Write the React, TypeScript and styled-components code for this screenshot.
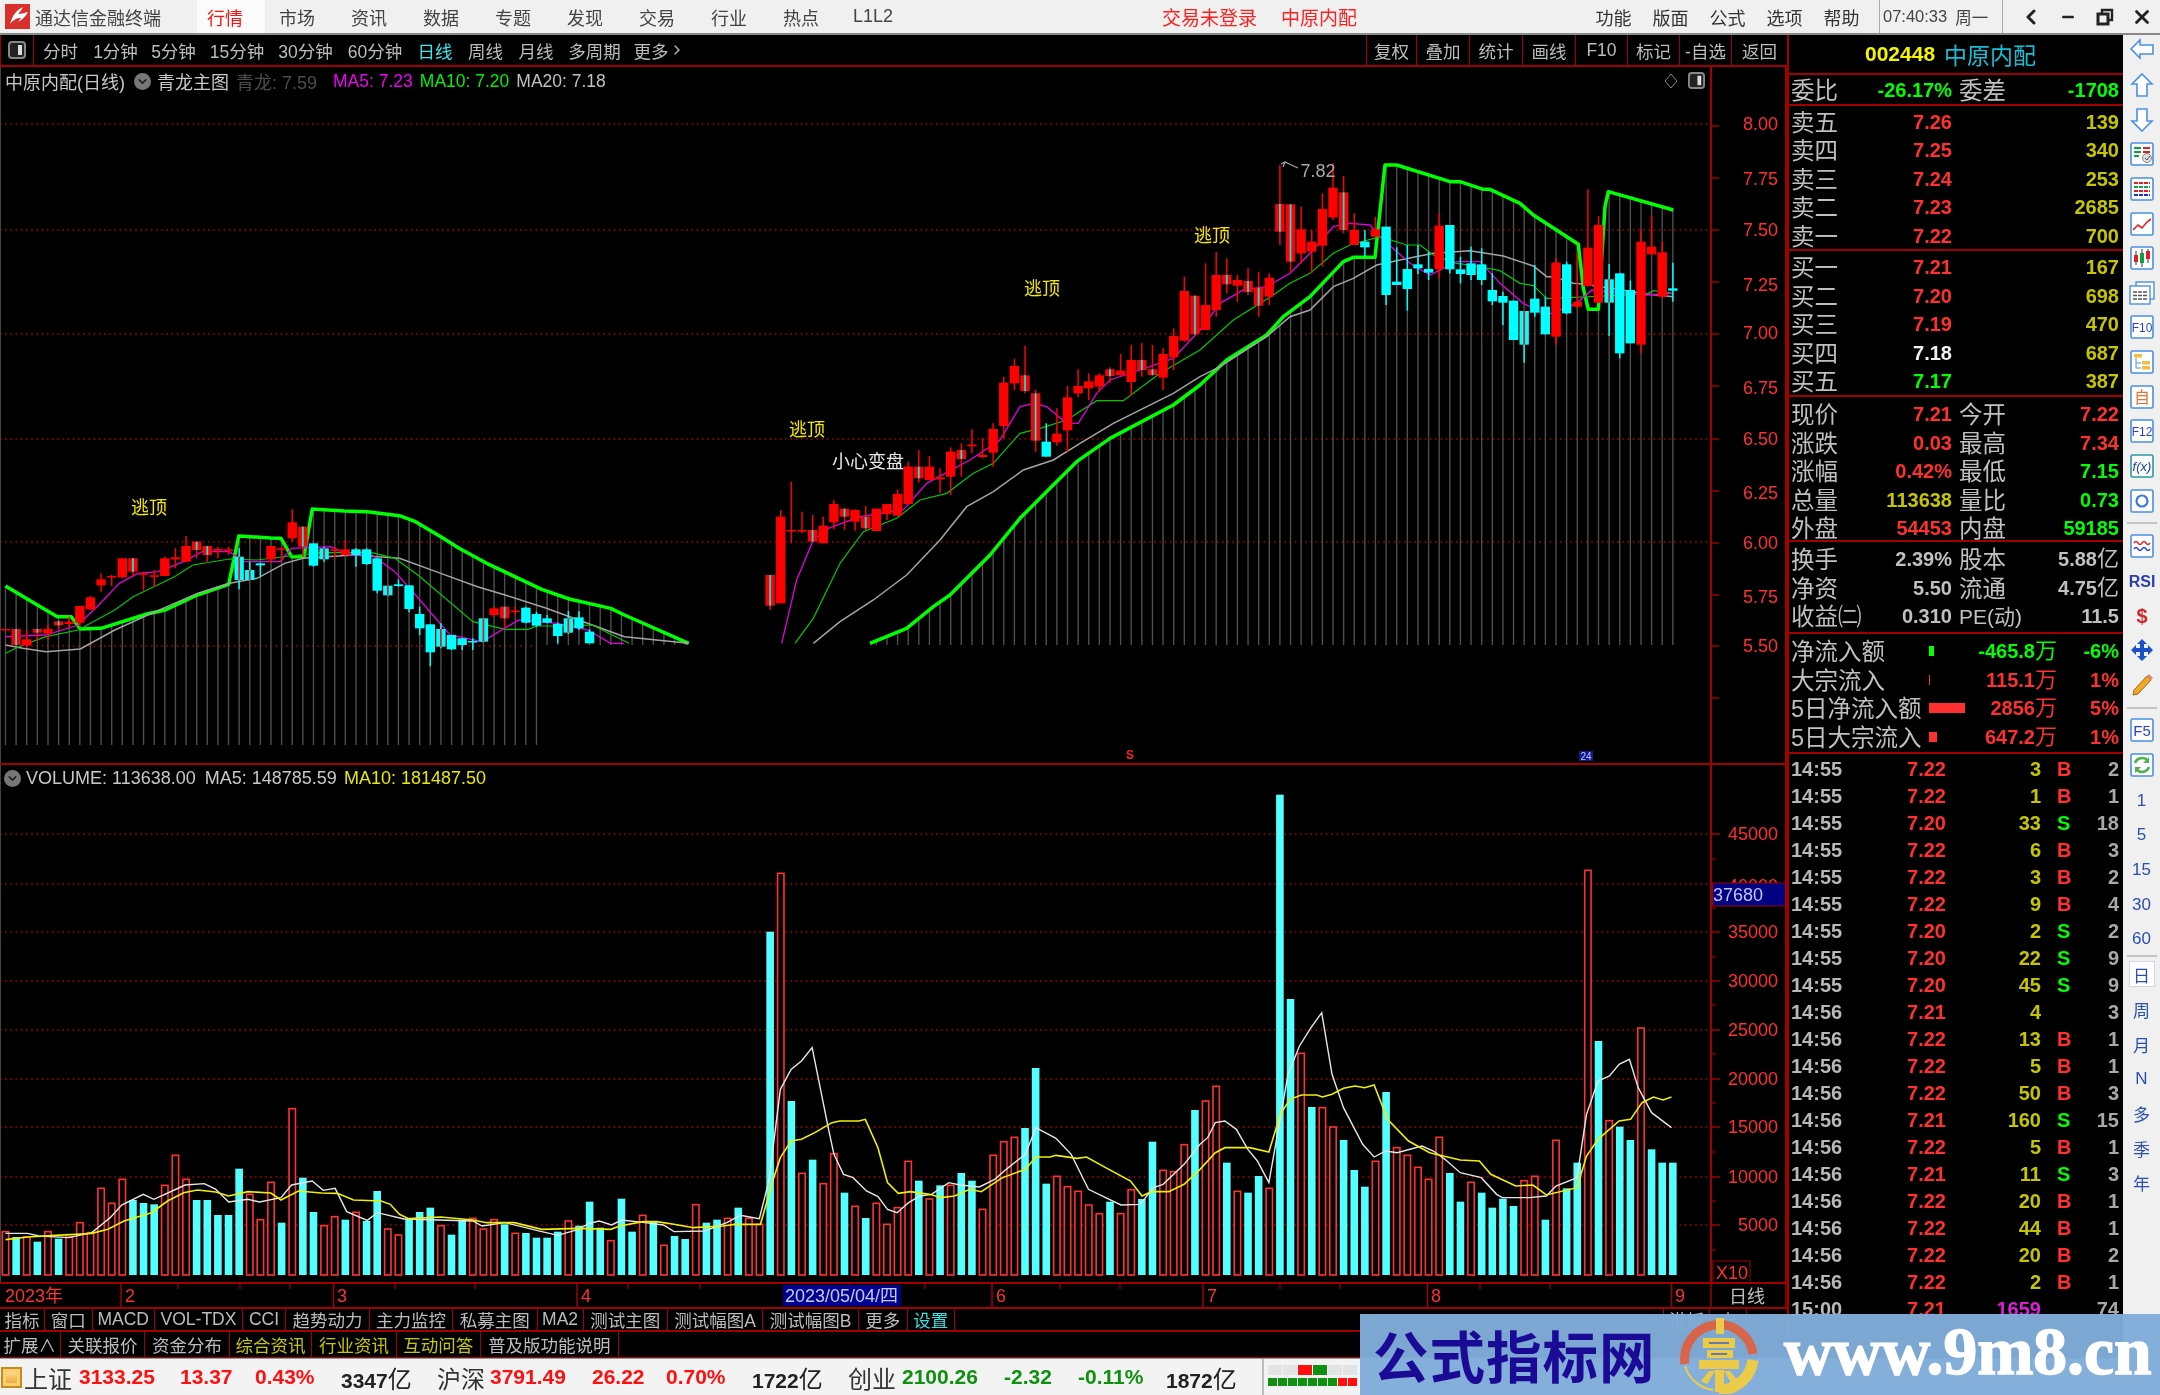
import React from 'react';
import styled, { createGlobalStyle } from 'styled-components';
import { ChevronDown, ChevronLeft, ChevronRight, Minus, X } from 'lucide-react';

const SANS = `"Liberation Sans","Noto Sans CJK SC",sans-serif`;
const RULE = '#a00000';
const RED = '#ff3030';
const CYAN = '#54ffff';

const Global = createGlobalStyle`
  html, body { margin: 0; padding: 0; background: #000; }
  * { box-sizing: border-box; }
  body { font-family: ${SANS}; }
`;

const Page = styled.div`
  position: relative;
  width: 2160px;
  height: 1395px;
  overflow: hidden;
  background: #000;
  display: grid;
  grid-template-rows: 35px 1323px 37px;
  filter: blur(0.35px);
`;

/* ---------- top bar ---------- */
const TopBar = styled.header`
  display: flex;
  align-items: center;
  height: 35px;
  background: #f0f0f0;
  border-bottom: 2px solid #8a8a8a;
  color: #333;
  font-size: 18px;
`;
const Brand = styled.div`
  width: 189px;
  display: flex;
  align-items: center;
  gap: 5px;
  padding-left: 5px;
  color: #444;
`;
const Nav = styled.nav`
  display: flex;
  height: 33px;
  isolation: isolate;
`;
const NavTab = styled.a<{ $active?: boolean }>`
  position: relative;
  width: 72px;
  display: flex;
  align-items: center;
  justify-content: center;
  color: ${p => (p.$active ? '#ff1010' : '#444')};
  &::before {
    content: '';
    display: ${p => (p.$active ? 'block' : 'none')};
    position: absolute;
    left: 8px;
    width: 68px;
    top: 0;
    bottom: 0;
    background: #fbfbfb;
    z-index: -1;
  }
`;
const Notice = styled.span<{ $ml: number }>`
  margin-left: ${p => p.$ml}px;
  color: #ff2020;
  font-size: 19px;
  white-space: nowrap;
`;
const RightTools = styled.div`
  margin-left: auto;
  display: flex;
  align-items: center;
  height: 33px;
`;
const MenuItem = styled.a`
  width: 57px;
  text-align: center;
`;
const Clock = styled.div`
  margin-left: 9px;
  width: 124px;
  height: 33px;
  border-left: 1px solid #aaa;
  border-right: 1px solid #aaa;
  padding-left: 3px;
  display: flex;
  align-items: center;
  gap: 8px;
  font-size: 16.5px;
  color: #444;
`;
const WinControls = styled.div`
  width: 157px;
  padding-left: 9px;
  display: flex;
`;
const WinButton = styled.span`
  width: 37px;
  display: flex;
  align-items: center;
  justify-content: center;
  color: #222;
`;

/* ---------- main layout ---------- */
const Main = styled.main`
  display: grid;
  grid-template-columns: 1787px 336px 37px;
  height: 1323px;
  overflow: hidden;
`;
const LeftColumn = styled.section`
  display: flex;
  flex-direction: column;
  background: #000;
  overflow: hidden;
`;
const Toolbar = styled.div`
  display: flex;
  height: 32px;
  flex: none;
  border-bottom: 2px solid ${RULE};
  color: #bcbcbc;
  font-size: 17.5px;
`;
const ToolIcon = styled.div`
  width: 34px;
  border-right: 1px solid ${RULE};
  border-left: 1px solid ${RULE};
  display: flex;
  align-items: center;
  justify-content: center;
`;
const ToolBtn = styled.a<{ $w: number; $on?: boolean }>`
  width: ${p => p.$w}px;
  display: flex;
  align-items: center;
  justify-content: center;
  white-space: nowrap;
  color: ${p => (p.$on ? '#3ce8f0' : '#bcbcbc')};
`;
const ToolRight = styled.div`
  margin-left: auto;
  display: flex;
`;
const ToolCell = styled.a<{ $w: number }>`
  width: ${p => p.$w}px;
  border-left: 1px solid ${RULE};
  display: flex;
  align-items: center;
  justify-content: center;
  white-space: nowrap;
`;

const ChartPanel = styled.div<{ $h: number }>`
  position: relative;
  height: ${p => p.$h}px;
  flex: none;
  border-bottom: 2px solid ${RULE};
`;
const ChartSvg = styled.svg`
  display: block;
  position: relative;
`;
const Legend = styled.div`
  position: absolute;
  left: 5px;
  top: 4px;
  height: 20px;
  display: flex;
  align-items: center;
  white-space: nowrap;
  font-size: 18px;
  color: #c8c8c8;
`;
const VolLegend = styled(Legend)`
  left: 4px;
  top: 3px;
`;
const LegendItem = styled.span<{ $ml?: number; $c?: string; $fs?: number }>`
  margin-left: ${p => p.$ml ?? 0}px;
  color: ${p => p.$c ?? '#c8c8c8'};
  font-size: ${p => p.$fs ?? 18}px;
`;
const Disc = styled.span<{ $ml?: number }>`
  margin-left: ${p => p.$ml ?? 0}px;
  width: 17px;
  height: 17px;
  border-radius: 50%;
  background: #777;
  color: #222;
  display: inline-flex;
  align-items: center;
  justify-content: center;
`;
const ChartTools = styled.div`
  position: absolute;
  right: 82px;
  top: 5px;
  display: flex;
  gap: 9px;
  align-items: center;
`;
const AxisText = styled.text`
  fill: ${RED};
  font-family: ${SANS};
  font-size: 18px;
  text-anchor: end;
`;
const ChartNote = styled.text<{ $c: string }>`
  fill: ${p => p.$c};
  font-family: ${SANS};
  font-size: 18px;
  text-anchor: middle;
`;
const DateText = styled.text<{ $c?: string }>`
  fill: ${p => p.$c ?? RED};
  font-family: ${SANS};
  font-size: 18px;
`;

const TabRow = styled.div<{ $h: number; $top?: boolean }>`
  display: flex;
  flex: none;
  height: ${p => p.$h}px;
  border-top: ${p => (p.$top ? `2px solid ${RULE}` : 'none')};
  border-bottom: 2px solid ${RULE};
  font-size: 17.5px;
  color: #bcbcbc;
`;
const TabCell = styled.a<{ $w: number; $c?: string }>`
  width: ${p => p.$w}px;
  flex: none;
  border-right: 1px solid ${RULE};
  display: flex;
  align-items: center;
  justify-content: center;
  white-space: nowrap;
  overflow: hidden;
  color: ${p => p.$c ?? '#bcbcbc'};
`;
const TabGap = styled.div<{ $w: number }>`
  width: ${p => p.$w}px;
  flex: none;
  border-right: 1px solid ${RULE};
`;

/* ---------- quote panel ---------- */
const Panel = styled.aside`
  border-left: 2px solid ${RULE};
  background: #000;
  overflow: hidden;
  color: #c0c0c0;
  font-size: 23.5px;
`;
const Block = styled.div<{ $h: number; $pt?: number }>`
  height: ${p => p.$h}px;
  padding-top: ${p => p.$pt ?? 0}px;
  border-bottom: 2px solid ${RULE};
  overflow: hidden;
`;
const Title = styled.div`
  height: 100%;
  display: flex;
  align-items: center;
  padding-left: 76px;
  gap: 9px;
`;
const Code = styled.span`
  color: #f4f400;
  font-weight: 700;
  font-size: 21px;
`;
const StockName = styled.span`
  color: #10c0d8;
  font-size: 23px;
`;
const Row4 = styled.div`
  display: grid;
  grid-template-columns: 48px 113px 55px 1fr;
  grid-template-rows: 28.5px;
  height: 28.5px;
  padding: 0 4px 0 2px;
  align-items: center;
  line-height: 26px;
`;
const Row3 = styled.div`
  display: grid;
  grid-template-columns: 48px 113px 1fr;
  grid-template-rows: 28.5px;
  height: 28.5px;
  padding: 0 4px 0 2px;
  align-items: center;
  line-height: 26px;
`;
const RowFlow = styled.div`
  display: grid;
  grid-template-columns: 138px 50px 78px 1fr;
  grid-template-rows: 28.5px;
  height: 28.5px;
  padding: 0 4px 0 2px;
  align-items: center;
  line-height: 26px;
`;
const Lab = styled.span`
  white-space: nowrap;
  padding-top: 2px;
`;
const Lab2 = styled(Lab)`
  padding-left: 7px;
`;
const LabPe = styled(Lab2)`
  font-size: 21px;
`;
const Val = styled.span<{ $c?: string }>`
  justify-self: end;
  text-align: right;
  white-space: nowrap;
  font-weight: 700;
  font-size: 20px;
  color: ${p => p.$c ?? '#c0c0c0'};
`;
const Unit = styled.span`
  font-weight: 400;
  font-size: 22px;
`;
const FlowBar = styled.span<{ $c: string }>`
  display: block;
  height: 10px;
  background: ${p => p.$c};
`;
const Ticks = styled.div`
  padding-top: 2px;
`;
const TickRow = styled.div`
  display: grid;
  grid-template-columns: 60px 95px 95px 30px 1fr;
  height: 27px;
  padding: 0 4px 0 2px;
  align-items: center;
  font-weight: 700;
  font-size: 20px;
`;
const TickTime = styled.span`
  color: #b8b8b8;
`;
const TickNum = styled.span<{ $c: string }>`
  justify-self: end;
  color: ${p => p.$c};
`;
const TickFlag = styled.span<{ $c: string }>`
  padding-left: 16px;
  color: ${p => p.$c};
`;

/* ---------- right rail ---------- */
const Rail = styled.nav`
  background: #f0f0f0;
  display: flex;
  flex-direction: column;
  align-items: center;
  margin-top: -2px;
`;
const RailRow = styled.div`
  width: 37px;
  height: 34.65px;
  flex: none;
  display: flex;
  align-items: center;
  justify-content: center;
`;
const RailDivider = styled.div<{ $h: number }>`
  width: 30px;
  height: ${p => p.$h}px;
  flex: none;
  display: flex;
  align-items: center;
  &::after {
    content: '';
    width: 100%;
    height: 2px;
    background: #c4c4c4;
  }
`;
const RailLabel = styled.span<{ $on?: boolean }>`
  width: 26px;
  height: 26px;
  padding-top: 2px;
  display: flex;
  align-items: center;
  justify-content: center;
  font-size: 17px;
  color: #2a4fb0;
  background: ${p => (p.$on ? '#fff' : 'transparent')};
  border: 1px solid ${p => (p.$on ? '#cfd8e6' : 'transparent')};
`;

/* ---------- status bar ---------- */
const Status = styled.footer`
  display: flex;
  align-items: center;
  height: 37px;
  background: #f3f3f3;
  border-top: 1px solid #999;
  font-size: 21px;
  color: #222;
`;
const StatusIcon = styled.span`
  width: 21px;
  height: 21px;
  margin: 0 2px 0 1px;
  flex: none;
  background: linear-gradient(#ffe79a, #e8a030);
  border: 2px solid #c88a20;
  box-shadow: inset 0 0 0 3px #f8d070;
`;
const StatusItem = styled.span<{ $w: number; $c?: string; $big?: boolean }>`
  width: ${p => p.$w}px;
  flex: none;
  white-space: nowrap;
  color: ${p => p.$c ?? '#222'};
  font-size: ${p => (p.$big ? 24 : 21)}px;
  font-weight: ${p => (p.$big ? 400 : 700)};
`;
const YiUnit = styled.span`
  font-size: 24px;
  font-weight: 400;
`;
const Meter = styled.div`
  height: 36px;
  padding: 6px 0 0 4px;
  border-left: 2px solid #bbb;
  display: grid;
  grid-auto-rows: min-content;
  gap: 3px;
`;
const MeterRow = styled.div`
  display: flex;
  gap: 1px;
`;
const MeterCell = styled.i<{ $c: string; $w: number; $h: number }>`
  display: block;
  width: ${p => p.$w}px;
  height: ${p => p.$h}px;
  background: ${p => p.$c};
`;

/* ---------- watermark ---------- */
const Watermark = styled.div`
  position: absolute;
  left: 1360px;
  top: 1314px;
  width: 800px;
  height: 81px;
  background: rgba(128, 172, 218, 0.97);
  display: flex;
  align-items: center;
  padding-left: 13px;
`;
const WmTitle = styled.span`
  width: 306px;
  flex: none;
  color: #1a0a96;
  font-family: "Noto Sans CJK SC", sans-serif;
  font-weight: 700;
  font-size: 55.5px;
  letter-spacing: 1px;
  white-space: nowrap;
  line-height: 1;
`;
const WmUrl = styled.span`
  margin: 0 0 6px 25px;
  color: #fff;
  font-family: "Liberation Serif", serif;
  font-weight: 700;
  font-size: 67.5px;
  line-height: 1;
  white-space: nowrap;
  -webkit-text-stroke: 1.5px #fff;
`;

/* ---------- chart data ---------- */
type P = [number, number];
const z9 = ([x, y]: P): P => [x / 2.178, 480 + y / 3];
const z8 = ([x, y]: P): P => [700 + x / 3, 280 + y / 3];
const z7 = ([x, y]: P): P => [1200 + x / 3, 140 + y / 3];
const v12 = ([x, y]: P): P => [x / 2.178, 1000 + y / 3];
const v10 = ([x, y]: P): P => [700 + x / 2.613, 780 + y / 3];
const v11 = ([x, y]: P): P => [1200 + x / 2.613, 780 + y / 3];
const line = (a: P[]) => a.map(p => p.join(',')).join(' ');
const cx = (i: number) => 5.5 + 10.62 * i;

const thickA: P[] = ([[12,318],[75,370],[125,410],[155,410],[175,447],[220,445],[320,402],[360,390],[430,345],[498,313],[520,168],[590,174],[612,175],[635,230],[662,230],[680,87],[750,93],[800,95],[870,107],[905,125],[960,170],[1000,205],[1060,250],[1180,328],[1240,357],[1330,385],[1360,405],[1500,490]] as P[]).map(z9);
const thickB: P[] = [...([[510,1090],[620,1045],[700,980],[750,945],[870,825],[960,715],[1050,625],[1130,545],[1230,475],[1420,375]] as P[]).map(z8),
  ...([[0,735],[80,660],[200,585],[250,530],[330,470],[430,365],[460,352],[525,352],[555,75],[590,75],[750,125],[780,125],[850,148],[870,148],[960,190],[1000,225],[1135,313],[1150,445],[1165,508],[1195,508],[1215,200],[1225,155],[1420,210]] as P[]).map(z7)];
const greyA: P[] = ([[12,495],[50,505],[100,515],[175,507],[250,450],[330,400],[430,340],[500,310],[560,295],[620,250],[660,235],[770,225],[870,235],[960,280],[1040,320],[1100,345],[1190,385],[1290,435],[1360,470],[1500,490]] as P[]).map(z9);
const greyB: P[] = [...([[340,1090],[420,1025],[520,960],[620,885],[720,780],[800,680],[880,635],[970,570],[1060,540],[1140,490],[1240,430],[1420,340]] as P[]).map(z8),
  ...([[0,710],[60,680],[200,590],[270,530],[330,510],[400,440],[460,415],[530,375],[640,352],[700,340],[810,332],[910,348],[1000,378],[1040,410],[1060,410],[1120,430],[1150,432],[1340,462],[1420,470]] as P[]).map(z7)];
const greenA: P[] = ([[12,520],[50,495],[100,470],[170,450],[250,390],[290,350],[380,290],[420,255],[500,237],[560,240],[630,228],[700,218],[810,218],[860,235],[910,285],[1030,425],[1100,448],[1150,448],[1170,438],[1230,438],[1290,435],[1370,490]] as P[]).map(z9);
const greenB: P[] = [...([[285,1090],[340,1015],[420,850],[490,755],[590,715],[660,660],[740,640],[820,580],[880,550],[960,460],[1020,445],[1100,420],[1190,362],[1270,362],[1380,280],[1500,210]] as P[]).map(z8),
  ...([[0,630],[100,540],[220,465],[270,430],[330,400],[400,340],[450,315],[540,290],[620,315],[660,315],[700,345],[770,370],[810,375],[900,392],[960,430],[1000,437],[1040,475],[1060,475],[1340,462],[1360,452],[1420,460]] as P[]).map(z7)];
const magA: P[] = ([[12,470],[100,465],[170,435],[215,375],[260,310],[300,280],[345,275],[400,245],[440,215],[500,215],[530,245],[610,245],[635,205],[720,200],[760,225],[810,225],[860,275],[905,345],[980,465],[1050,485],[1130,420],[1215,430],[1280,450],[1330,490],[1360,490]] as P[]).map(z9);
const magB: P[] = [...([[245,1090],[290,900],[340,780],[385,745],[480,710],[610,690],[680,610],[810,540],[900,480],[960,380],[1000,370],[1040,380],[1100,430],[1135,430],[1190,340],[1230,300],[1320,270],[1420,235],[1500,150]] as P[]).map(z8),
  ...([[0,570],[60,490],[130,450],[200,440],[270,400],[330,340],[400,260],[450,250],[510,255],[545,295],[630,370],[690,405],[770,365],[840,365],[900,430],[970,490],[1040,525],[1130,490],[1175,450],[1340,465],[1420,460]] as P[]).map(z7)];

type K = 'r' | 'c' | 'rc' | 'cr';
type C = [number, number, number, number, number, K];
const c9: C[] = [[0,446,447,449,449,'r'],[1,447,447,495,495,'rc'],[2,450,478,497,500,'r'],[3,447,447,458,485,'rc'],[4,435,447,460,480,'r'],[5,424,424,436,450,'rc'],[6,410,425,432,445,'r'],[7,378,378,428,440,'r'],[8,348,352,388,390,'r'],[9,280,298,316,335,'r'],[10,285,288,291,318,'r'],[11,235,235,292,295,'r'],[12,235,235,275,290,'rc'],[13,275,280,283,332,'r'],[14,270,286,289,320,'r'],[15,230,235,288,288,'r'],[16,205,232,238,265,'r'],[17,168,198,245,245,'r'],[18,185,185,210,235,'rc'],[19,198,198,225,248,'rc'],[20,200,207,212,235,'r'],[21,200,208,211,225,'r'],[22,205,230,300,328,'cr'],[23,245,270,300,300,'cr'],[24,248,250,256,290,'c'],[25,198,198,238,250,'r'],[26,200,205,208,245,'r'],[27,88,127,175,185,'r'],[28,140,140,200,230,'rc'],[29,190,190,257,260,'c'],[30,200,205,238,245,'cr'],[31,200,208,212,235,'r'],[32,180,208,225,228,'r'],[33,205,208,225,260,'c'],[34,205,208,252,255,'c'],[35,235,235,332,340,'c'],[36,317,317,346,348,'cr'],[37,298,313,318,320,'c'],[38,316,316,387,397,'c'],[39,380,402,445,465,'c'],[40,433,433,517,558,'c'],[41,430,447,500,505,'cr'],[42,465,465,508,510,'c'],[43,475,475,495,510,'c'],[44,475,483,486,510,'c'],[45,415,415,485,487,'cr'],[46,380,385,405,410,'r'],[47,380,380,415,445,'rc'],[48,380,392,395,405,'r'],[49,380,383,428,430,'c'],[50,395,402,437,440,'c'],[51,405,415,428,430,'c'],[52,428,432,468,490,'c'],[53,393,415,458,462,'cr'],[54,393,412,445,450,'c'],[55,448,455,490,490,'c']];
const c8: C[] = [[72,885,885,977,990,'rc'],[73,690,710,970,970,'r'],[74,605,750,753,790,'r'],[75,695,750,753,760,'r'],[76,705,750,785,785,'rc'],[77,710,737,790,790,'r'],[78,660,672,727,748,'r'],[79,686,686,710,750,'rc'],[80,688,690,725,752,'r'],[81,678,710,745,750,'rc'],[82,686,686,753,753,'r'],[83,672,672,702,720,'r'],[84,628,642,707,707,'r'],[85,545,560,672,672,'r'],[86,510,560,595,608,'rc'],[87,528,560,600,600,'r'],[88,565,592,598,640,'r'],[89,502,515,590,645,'r'],[90,490,510,537,590,'rc'],[91,448,494,499,520,'r'],[92,475,525,531,535,'r'],[93,430,447,518,560,'r'],[94,290,308,438,475,'r'],[95,237,258,310,330,'r'],[96,197,286,333,340,'rc'],[97,330,340,482,515,'rc'],[98,430,485,530,530,'c'],[99,385,461,487,497,'r'],[100,318,352,451,515,'r'],[101,268,318,340,352,'r'],[102,280,304,325,360,'r'],[103,280,286,320,335,'r'],[104,262,268,288,310,'rc'],[105,222,272,285,288,'r'],[106,195,240,306,348,'r'],[107,190,240,270,290,'rc'],[108,195,268,285,288,'rc'],[109,205,222,293,330,'r'],[110,145,168,232,270,'r'],[111,-10,33,182,185,'r'],[112,47,47,163,163,'rc']];
const c7: C[] = [[113,370,495,570,570,'r'],[114,337,405,510,530,'r'],[115,355,405,433,460,'rc'],[116,405,420,437,485,'r'],[117,385,423,456,465,'rc'],[118,395,443,497,530,'rc'],[119,400,413,470,495,'r'],[120,75,192,275,315,'rc'],[121,193,193,365,395,'rc'],[122,200,268,340,370,'r'],[123,270,305,335,400,'r'],[124,160,207,317,380,'r'],[125,70,143,232,240,'r'],[126,108,157,270,280,'rc'],[127,220,270,315,315,'r'],[128,270,305,322,350,'c'],[129,230,268,290,290,'r'],[130,260,260,465,495,'c'],[131,322,425,435,435,'c'],[132,315,387,447,512,'c'],[133,315,373,385,402,'c'],[134,335,387,398,420,'c'],[135,220,257,388,415,'r'],[136,255,255,388,400,'c'],[137,350,388,402,430,'c'],[138,320,370,405,420,'c'],[139,325,373,420,435,'c'],[140,400,450,484,495,'c'],[141,455,468,488,555,'c'],[142,482,482,600,600,'c'],[143,513,513,614,668,'cr'],[144,375,476,518,530,'c'],[145,470,500,583,583,'c'],[146,355,368,590,615,'r'],[147,365,373,520,523,'c'],[148,340,485,500,505,'r'],[149,148,323,438,440,'r'],[150,228,255,488,490,'r'],[151,372,418,488,588,'cr'],[152,400,400,640,655,'c'],[153,422,450,610,610,'c'],[154,268,305,614,640,'r'],[155,228,320,343,343,'r'],[156,305,337,470,475,'r'],[157,368,445,452,485,'c']];
const scaleC = (a: C[], o: number): C[] => a.map(([i, w, t, b, l, k]) => [i, o + w / 3, o + t / 3, o + b / 3, o + l / 3, k]);
const candles: C[] = [...scaleC(c9, 480), ...scaleC(c8, 280), ...scaleC(c7, 140)];

const thickAll = [...thickA, ...thickB];
const greenY = (x: number) => {
  if (x > thickA[thickA.length - 1][0] && x < thickB[0][0]) return 999;
  for (let k = 0; k < thickAll.length - 1; k++) {
    const [x1, y1] = thickAll[k];
    const [x2, y2] = thickAll[k + 1];
    if (x >= x1 && x <= x2) return y1 + (x2 === x1 ? 0 : ((x - x1) / (x2 - x1)) * (y2 - y1));
  }
  return x < thickAll[0][0] ? thickAll[0][1] : thickAll[thickAll.length - 1][1];
};

const VOL_A = 'R692 C708 R708 C722 R692 C713 R708 R665 R695 R562 R607 R535 C597 C606 C610 R553 R463 R535 C597 C597 C642 C642 C503 R580 R656 R544 C665 R323 C530 C633 R674 R647 C656 R634 C660 C570 R684 R702 C652 C633 C620 R674 C701 C656 R652 R684 R656 C670 R697 C696 C710 C710 C692 R660 C674 C602 C680 R719 C593 C692 R643 C660 R733 C705 C714 R611'.split(' ');
const VOL_B = 'C1325 C1316 R1312 C1280 R1312 R1330 C452 R277 C960 R1177 C1136 R1208 R1118 C1235 R1276 C1311 R1267 R1330 R1280 R1141 C1199 R1254 C1213 R1213 C1176 C1199 R1285 R1123 R1082 R1069 C1041 C861 C1208 R1186 R1217 R1231 R1272 R1298 C1262 R1298 R1226 C1254 C1082 R1168 R1172 R1091 C987 R960 R916 C1145 R1231 C1235 C1185 R1222 C41 C654 R817 C978 R980 R1038 C1077 C1167 C1217 R1141 C933 R1100 R1123 R1159 R1195 R1069 C1176 C1262 R1204 C1235 C1280 C1253 C1275 R1199 R1186 C1316 R1078 C1222 C1145 R268 C780 R1019 C1037 C1077 R741 C1105 C1145 C1145'.split(' ');
const volBars = [
  ...VOL_A.map(s => ({ red: s[0] === 'R', top: 1000 + Number(s.slice(1)) / 3 })),
  ...VOL_B.map(s => ({ red: s[0] === 'R', top: 780 + Number(s.slice(1)) / 3 })),
];
const volWhite: P[] = [
  ...([[12,697],[60,697],[85,705],[150,710],[200,695],[240,650],[265,612],[312,580],[335,595],[375,570],[403,552],[445,548],[470,565],[498,603],[540,595],[565,603],[612,590],[635,552],[680,540],[704,568],[730,562],[755,632],[800,658],[822,635],[880,654],[1030,660],[1050,675],[1100,665],[1180,692],[1215,703],[1260,685],[1282,668],[1305,660],[1332,672],[1354,657],[1400,664],[1445,672],[1468,692],[1535,690]] as P[]).map(v12),
  ...([[70,1325],[105,1303],[155,1313],[180,1200],[210,925],[238,865],[265,840],[293,800],[335,1040],[350,1120],[375,1180],[400,1190],[435,1230],[465,1247],[490,1285],[515,1295],[545,1265],[575,1245],[605,1240],[650,1205],[680,1212],[730,1218],[770,1195],[800,1165],[850,1120],[878,1040],[930,1072],[970,1120],[1015,1225],[1060,1250],[1100,1272],[1150,1270],[1185,1220],[1210,1210],[1265,1150]] as P[]).map(v10),
  ...([[0,1090],[20,1070],[40,1025],[65,1020],[95,1045],[125,1105],[150,1140],[180,1205],[230,880],[260,795],[290,740],[318,695],[345,880],[375,980],[425,1090],[455,1128],[485,1110],[515,1115],[580,1095],[610,1110],[640,1135],[680,1175],[735,1190],[775,1240],[790,1250],[860,1250],[905,1245],[930,1215],[985,1190],[1010,1000],[1040,900],[1070,885],[1095,850],[1122,835],[1145,920],[1180,995],[1232,1040]] as P[]).map(v11),
];
const volYellow: P[] = [
  ...([[12,716],[60,708],[120,703],[165,700],[200,697],[235,685],[270,660],[330,635],[365,600],[400,575],[430,567],[470,573],[498,585],[540,572],[590,576],[612,597],[650,570],[700,576],[735,577],[770,597],[830,600],[850,610],[870,640],[890,653],[960,648],[1030,657],[1060,665],[1120,665],[1180,685],[1260,682],[1330,685],[1350,675],[1400,662],[1430,662],[1468,670],[1510,680]] as P[]).map(v12),
  ...([[60,1335],[90,1330],[158,1330],[190,1200],[210,1130],[238,1080],[265,1075],[300,1055],[345,1025],[365,1020],[415,1020],[432,1015],[465,1100],[490,1205],[518,1237],[550,1232],[600,1240],[630,1250],[665,1245],[705,1225],[735,1232],[790,1190],[850,1165],[878,1128],[915,1128],[930,1123],[985,1132],[1010,1128],[1060,1160],[1125,1200],[1155,1245],[1180,1232],[1225,1232],[1265,1210]] as P[]).map(v10),
  ...([[0,1165],[40,1115],[65,1100],[130,1100],[180,1113],[210,1000],[235,955],[265,942],[305,942],[320,948],[345,940],[375,922],[405,915],[430,920],[455,912],[490,1015],[545,1080],[600,1115],[680,1137],[730,1140],[760,1180],[825,1215],[870,1212],[905,1242],[985,1220],[1010,1125],[1040,1075],[1095,1020],[1125,1015],[1155,965],[1185,948],[1210,957],[1232,948]] as P[]).map(v11),
];

const priceLabels: [string, number][] = [['8.00',124],['7.75',179],['7.50',230],['7.25',285],['7.00',333],['6.75',388],['6.50',439],['6.25',493],['6.00',543],['5.75',597],['5.50',646]];
const volLabels: [string, number][] = [['45000',833],['35000',931],['30000',980],['25000',1029],['20000',1078],['15000',1126],['10000',1176],['5000',1224]];
const volGrid = [833, 883, 931, 980, 1029, 1078, 1126, 1176, 1224];

/* ---------- charts ---------- */
const CandleShape: React.FC<{ c: C }> = ({ c }) => {
  const [i, w, t, b, l, k] = c;
  const x = cx(i);
  const main = k[0] === 'r' ? '#ff0000' : '#00ffff';
  const inner = k === 'rc' ? '#14e0e0' : k === 'cr' ? '#e02020' : null;
  return (
    <g>
      <line x1={x} x2={x} y1={w} y2={l} stroke={main} strokeWidth={1.5} />
      <rect x={x - 4.7} y={t} width={9.4} height={Math.max(b - t, 1.5)} fill={main} />
      {inner && <line x1={x} x2={x} y1={t} y2={b} stroke={inner} strokeWidth={1.8} />}
    </g>
  );
};

const PriceChart = () => (
  <ChartSvg viewBox="0 67 1787 696" width={1787} height={696}>
    {[124, 230, 334, 439, 542].map(y => (
      <line key={y} x1={0} x2={1710} y1={y} y2={y} stroke="#b00000" strokeWidth={1.3} strokeDasharray="1.6 3.6" />
    ))}
    <line x1={0} x2={532} y1={646} y2={646} stroke="#b00000" strokeWidth={1.3} strokeDasharray="1.6 3.6" />
    <line x1={0.5} x2={0.5} y1={67} y2={764} stroke="#444" />
    {Array.from({ length: 158 }, (_, i) => {
      const x = cx(i);
      const y1 = greenY(x);
      const y2 = x < 537 ? 745 : 645;
      return y1 < y2 ? <line key={i} x1={x} x2={x} y1={y1} y2={y2} stroke="#4e4e4e" strokeWidth={1.4} /> : null;
    })}
    {[thickA, thickB].map((a, n) => (
      <polyline key={n} points={line(a)} fill="none" stroke="#00ff00" strokeWidth={3.5} strokeLinejoin="round" />
    ))}
    {[greyA, greyB].map((a, n) => (
      <polyline key={n} points={line(a)} fill="none" stroke="#a4a4a4" strokeWidth={1.5} />
    ))}
    {[greenA, greenB].map((a, n) => (
      <polyline key={n} points={line(a)} fill="none" stroke="#00c800" strokeWidth={1.2} />
    ))}
    {[magA, magB].map((a, n) => (
      <polyline key={n} points={line(a)} fill="none" stroke="#e000e0" strokeWidth={1.3} />
    ))}
    {candles.map(c => <CandleShape key={c[0]} c={c} />)}
    <ChartNote $c="#f4e800" x={149} y={514}>逃顶</ChartNote>
    <ChartNote $c="#f4e800" x={807} y={436}>逃顶</ChartNote>
    <ChartNote $c="#f4e800" x={1042} y={295}>逃顶</ChartNote>
    <ChartNote $c="#f4e800" x={1212} y={242}>逃顶</ChartNote>
    <ChartNote $c="#e8e8e8" x={868} y={468}>小心变盘</ChartNote>
    <ChartNote $c="#a8a8a8" x={1318} y={177}>7.82</ChartNote>
    <polyline points="1281,164 1285,162 1283,167 1285,162 1298,168" fill="none" stroke="#a8a8a8" strokeWidth={1.2} />
    <text x={1130} y={759} fill="#ff2020" fontSize={12} fontWeight={700} textAnchor="middle" fontFamily={SANS}>S</text>
    <rect x={1579} y={751} width={14} height={10} fill="#101890" />
    <text x={1586} y={760} fill="#c0c0ff" fontSize={10} textAnchor="middle" fontFamily={SANS}>24</text>
    <line x1={1711} x2={1711} y1={67} y2={764} stroke={RULE} strokeWidth={2} />
    <line x1={1786} x2={1786} y1={67} y2={764} stroke={RULE} strokeWidth={2} />
    {[126, 178, 230, 282, 334, 386, 439, 491, 543, 595, 646, 698].map(y => (
      <line key={y} x1={1711} x2={1719} y1={y} y2={y} stroke={RULE} strokeWidth={1.5} />
    ))}
    {priceLabels.map(([t, y]) => <AxisText key={t} x={1778} y={y + 6}>{t}</AxisText>)}
  </ChartSvg>
);

const VolumeChart = () => (
  <ChartSvg viewBox="0 764 1787 517" width={1787} height={517}>
    {volGrid.map(y => (
      <line key={y} x1={0} x2={1711} y1={y} y2={y} stroke="#b00000" strokeWidth={1.3} strokeDasharray="1.6 3.6" />
    ))}
    <line x1={0.5} x2={0.5} y1={764} y2={1281} stroke="#444" />
    {volBars.map((b, i) => (
      b.red
        ? <rect key={i} x={cx(i) - 3.2} y={b.top} width={6.4} height={1274 - b.top} fill="#000" stroke="#ff3232" strokeWidth={1.6} />
        : <rect key={i} x={cx(i) - 3.8} y={b.top} width={7.6} height={1274 - b.top} fill={CYAN} />
    ))}
    <polyline points={line(volWhite)} fill="none" stroke="#e6e6e6" strokeWidth={1.4} />
    <polyline points={line(volYellow)} fill="none" stroke="#f0f000" strokeWidth={1.6} />
    <line x1={1711} x2={1711} y1={764} y2={1283} stroke={RULE} strokeWidth={2} />
    <line x1={1786} x2={1786} y1={764} y2={1283} stroke={RULE} strokeWidth={2} />
    {volGrid.map(y => (
      <line key={y} x1={1711} x2={1720} y1={y} y2={y} stroke={RULE} strokeWidth={1.5} />
    ))}
    {[858, 907, 956, 1004, 1053, 1102, 1151, 1200, 1249].map(y => (
      <line key={y} x1={1711} x2={1716} y1={y} y2={y} stroke={RULE} strokeWidth={1.2} />
    ))}
    {volLabels.map(([t, y]) => <AxisText key={t} x={1778} y={y + 6}>{t}</AxisText>)}
    <AxisText x={1778} y={891}>40000</AxisText>
    <rect x={1712.5} y={882} width={73} height={23} fill="#000080" stroke={RULE} />
    <text x={1713} y={900} fill="#c4c4ff" fontSize={18} fontFamily={SANS}>37680</text>
    <rect x={1713} y={1260} width={37} height={24} fill="#000" stroke={RULE} />
    <text x={1716} y={1278} fill={RED} fontSize={18} fontFamily={SANS}>X10</text>
  </ChartSvg>
);

const DateSvg = styled.svg`
  display: block;
  flex: none;
`;
const DateAxis = () => (
  <DateSvg viewBox="0 1283 1787 23" width={1787} height={23}>
    {[121, 333.5, 577, 992, 1203, 1427.5, 1671.6, 1711, 1786].map(x => (
      <line key={x} x1={x} x2={x} y1={1283} y2={1306} stroke={RULE} strokeWidth={1.5} />
    ))}
    {[178, 240, 290, 395, 475, 628, 700, 850, 925, 1060, 1120, 1280, 1340, 1480, 1550].map(x => (
      <line key={x} x1={x} x2={x} y1={1283} y2={1288} stroke={RULE} strokeWidth={1.2} />
    ))}
    <DateText x={5} y={1301}>2023年</DateText>
    {([['2', 125], ['3', 337], ['4', 581], ['6', 996], ['7', 1207], ['8', 1431], ['9', 1675]] as [string, number][]).map(([t, x]) => (
      <DateText key={t} x={x} y={1301}>{t}</DateText>
    ))}
    <rect x={783} y={1284} width={118} height={21} fill="#000090" />
    <DateText $c="#c8c8e8" x={785} y={1301}>2023/05/04/四</DateText>
    <DateText $c="#c0c0c0" x={1729} y={1302}>日线</DateText>
  </DateSvg>
);

/* ---------- small drawn icons ---------- */
const LogoMark = () => (
  <svg width="25" height="25" viewBox="0 0 25 25">
    <rect width="25" height="25" fill="#d8302c" />
    <path d="M18 3 C12 6 8 10 5 20 C9 15 12 14 16 14 L13 18 C17 16 21 12 23 8 C19 9 16 10 13 10 C15 8 17 5 18 3Z" fill="#fff" />
  </svg>
);
const PaneIcon = ({ size = 18 }: { size?: number }) => (
  <svg width={size} height={size} viewBox="0 0 18 18">
    <rect x="1" y="1" width="16" height="16" rx="3" fill="#222" stroke="#888" strokeWidth="2" />
    <rect x="10" y="4" width="4" height="10" fill="#ddd" />
  </svg>
);
const RestoreIcon = () => (
  <svg width="18" height="18" viewBox="0 0 18 18" fill="none" stroke="#222" strokeWidth="3">
    <rect x="2" y="6" width="10" height="10" />
    <path d="M6 5V2h10v10h-3" strokeWidth="2.4" />
  </svg>
);
const arrowProps = { fill: '#fff', stroke: '#4a90e8', strokeWidth: 1.6 };
const Tile: React.FC<{ children: React.ReactNode; stroke?: string }> = ({ children, stroke = '#4a90e2' }) => (
  <svg width="24" height="24" viewBox="0 0 24 24">
    <rect x="1" y="1" width="22" height="22" rx="1.5" fill="#fff" stroke={stroke} strokeWidth="1.6" />
    {children}
  </svg>
);
const Bare: React.FC<{ children: React.ReactNode }> = ({ children }) => (
  <svg width="26" height="26" viewBox="0 0 26 26">{children}</svg>
);
const tileText = { fontFamily: SANS, textAnchor: 'middle' as const };

const railIcons: React.ReactNode[] = [
  <Bare><polygon points="2,12 11,3 11,8 24,8 24,17 11,17 11,21" {...arrowProps} /></Bare>,
  <Bare><polygon points="13,2 23,12 18,12 18,24 8,24 8,12 3,12" {...arrowProps} /></Bare>,
  <Bare><polygon points="13,24 23,14 18,14 18,2 8,2 8,14 3,14" {...arrowProps} /></Bare>,
  <Tile><path d="M4 6h7M4 10h7M4 14h5" stroke="#10a040" strokeWidth="2" /><path d="M13 6h7M13 10h7" stroke="#e02020" strokeWidth="2" /><circle cx="17" cy="16" r="4.5" fill="#ddd" stroke="#888" /><path d="M15 16l2 2 3-4" stroke="#555" fill="none" /></Tile>,
  <Tile><path d="M4 6h16" stroke="#e02020" strokeWidth="2" strokeDasharray="4 1" /><path d="M4 10h16" stroke="#20a040" strokeWidth="2" strokeDasharray="4 1" /><path d="M4 14h16" stroke="#e02020" strokeWidth="2" strokeDasharray="4 1" /><path d="M4 18h16" stroke="#2030d0" strokeWidth="2" strokeDasharray="4 1" /></Tile>,
  <Tile><polyline points="3,18 8,13 12,16 17,10 21,7" fill="none" stroke="#e82020" strokeWidth="1.6" /></Tile>,
  <Tile><path d="M6 5v14M12 3v18M18 3v14" stroke="#333" strokeWidth="1" /><rect x="4" y="9" width="4" height="7" fill="#e02020" /><rect x="10" y="7" width="4" height="10" fill="#10a040" /><rect x="16" y="5" width="4" height="8" fill="#e02020" /></Tile>,
  <svg width="26" height="24" viewBox="0 0 26 24"><rect x="7" y="1" width="18" height="17" fill="#fff" stroke="#4a90e2" strokeWidth="1.4" /><rect x="1" y="5" width="20" height="18" fill="#fff" stroke="#4a90e2" strokeWidth="1.4" /><path d="M4 11h14M4 14.5h14M4 18h14" stroke="#555" strokeWidth="1.6" strokeDasharray="4 1" /></svg>,
  <Tile><text x="12" y="17" fontSize="12" fill="#2a3fd0" {...tileText}>F10</text></Tile>,
  <Tile><rect x="4" y="4" width="8" height="3.5" fill="#f0c040" /><path d="M6 8v10h5M6 13h5" stroke="#4a90e2" fill="none" /><rect x="12" y="11" width="8" height="3.5" fill="#f0c040" /><rect x="12" y="16" width="8" height="3.5" fill="#f0c040" /></Tile>,
  <Tile><text x="12" y="18" fontSize="16" fill="#e8703a" {...tileText}>自</text></Tile>,
  <Tile><text x="12" y="17" fontSize="12" fill="#2a3fd0" {...tileText}>F12</text></Tile>,
  <Tile stroke="#2a9aa0"><text x="12" y="17" fontSize="13" fontStyle="italic" fill="#1a3ab0" {...tileText}>f(x)</text></Tile>,
  <Tile><circle cx="12" cy="12" r="5.5" fill="none" stroke="#3a7ad8" strokeWidth="2.2" /></Tile>,
  'd',
  <Tile><path d="M4 9q2-3 4 0t4 0 4 0 4 0" fill="none" stroke="#e02020" strokeWidth="1.4" /><path d="M4 15q2-3 4 0t4 0 4 0 4 0" fill="none" stroke="#2a3fd0" strokeWidth="1.4" /></Tile>,
  <Bare><text x="13" y="19" fontSize="16" fontWeight="700" fill="#2a3fb0" {...tileText}>RSI</text></Bare>,
  <Bare><text x="13" y="20" fontSize="20" fontWeight="700" fill="#d02828" {...tileText}>$</text></Bare>,
  <Bare><path d="M13 2l5 5h-3v4h4V8l5 5-5 5v-3h-4v4h3l-5 5-5-5h3v-4H7v3l-5-5 5-5v3h4V7H8z" fill="#1a50c8" /></Bare>,
  <Bare><polygon points="5,18 18,4 22,8 9,22 4,23" fill="#f0a828" stroke="#a06818" strokeWidth="1" /><polygon points="18,4 20,2 24,6 22,8" fill="#d88" /></Bare>,
  'd',
  <Tile><text x="12" y="18" fontSize="15" fill="#2a3fd0" {...tileText}>F5</text></Tile>,
  <Tile><path d="M5 10a7.5 7.5 0 0 1 13-2M19 14a7.5 7.5 0 0 1-13 2" fill="none" stroke="#50b050" strokeWidth="2.6" /><path d="M19 4v6h-6zM5 20v-6h6z" fill="#50b050" /></Tile>,
];

const CoinLogo = () => (
  <svg width="80" height="78" viewBox="0 0 80 78">
    <path d="M6 48 A34 34 0 1 1 74 38" fill="none" stroke="#d8644a" strokeWidth="9" />
    <path d="M74 44 A34 34 0 0 1 40 74" fill="none" stroke="#eccb4a" strokeWidth="11" />
    <path d="M6 50 A34 34 0 0 0 34 74" fill="none" stroke="#eccb4a" strokeWidth="2" />
    <rect x="37" y="2" width="8" height="16" fill="#eccb4a" />
    <rect x="24" y="22" width="32" height="10" fill="#eccb4a" />
    <rect x="28" y="34" width="26" height="8" fill="#eccb4a" />
    <rect x="20" y="44" width="40" height="9" fill="#eccb4a" />
    <path d="M36 54h9v22h-9zM30 55l6 0-8 13-6-3zM51 55l-6 0 8 13 6-3z" fill="#eccb4a" />
    <path d="M30 27h20M32 38h16" stroke="#6a7aa8" strokeWidth="2" />
  </svg>
);

/* ---------- data for panels ---------- */
const G = '#00ff00';
const Y = '#c4c400';
const R = '#ff3030';
const W = '#f0f0f0';
const sell = [['卖五', '7.26', '139'], ['卖四', '7.25', '340'], ['卖三', '7.24', '253'], ['卖二', '7.23', '2685'], ['卖一', '7.22', '700']];
const buy: [string, string, string, string][] = [['买一', '7.21', '167', R], ['买二', '7.20', '698', R], ['买三', '7.19', '470', R], ['买四', '7.18', '687', W], ['买五', '7.17', '387', G]];
const stats: [string, string, string, string, string, string][] = [
  ['现价', '7.21', R, '今开', '7.22', R],
  ['涨跌', '0.03', R, '最高', '7.34', R],
  ['涨幅', '0.42%', R, '最低', '7.15', G],
  ['总量', '113638', Y, '量比', '0.73', G],
  ['外盘', '54453', R, '内盘', '59185', G],
];
const flows: [string, string, number, string, string][] = [
  ['净流入额', G, 5, '-465.8', '-6%'],
  ['大宗流入', R, 1, '115.1', '1%'],
  ['5日净流入额', R, 36, '2856', '5%'],
  ['5日大宗流入', R, 8, '647.2', '1%'],
];
const ticks: [string, string, string, string, string][] = [
  ['14:55','7.22','3','B','2'],['14:55','7.22','1','B','1'],['14:55','7.20','33','S','18'],['14:55','7.22','6','B','3'],
  ['14:55','7.22','3','B','2'],['14:55','7.22','9','B','4'],['14:55','7.20','2','S','2'],['14:55','7.20','22','S','9'],
  ['14:55','7.20','45','S','9'],['14:56','7.21','4','','3'],['14:56','7.22','13','B','1'],['14:56','7.22','5','B','1'],
  ['14:56','7.22','50','B','3'],['14:56','7.21','160','S','15'],['14:56','7.22','5','B','1'],['14:56','7.21','11','S','3'],
  ['14:56','7.22','20','B','1'],['14:56','7.22','44','B','1'],['14:56','7.22','20','B','2'],['14:56','7.22','2','B','1'],
  ['15:00','7.21','1659','','74'],
];
const tools: [string, number, boolean?][] = [['分时',53],['1分钟',57],['5分钟',59],['15分钟',68],['30分钟',69],['60分钟',70],['日线',50,true],['周线',51],['月线',50],['多周期',67]];
const toolRight: [string, number][] = [['复权',50],['叠加',53],['统计',53],['画线',53],['F10',52],['标记',52],['-自选',52],['返回',56]];
const tabs1: [string, number, string?][] = [['指标',45],['窗口',47.5],['MACD',62.5],['VOL-TDX',88],['CCI',43],['趋势动力',84],['主力监控',83],['私募主图',84.6],['MA2',46],['测试主图',84.5],['测试幅图A',95],['测试幅图B',96],['更多',48.5],['设置',47.5,'#38e0e0']];
const tabs2: [string, number, string?][] = [['扩展∧',60.6],['关联报价',84.8],['资金分布',84.2],['综合资讯',82.9,'#c8c800'],['行业资讯',84.2,'#c8c800'],['互动问答',84.3,'#c8c800'],['普及版功能说明',137.6]];
const railNums = ['1', '5', '15', '30', '60'];
const railPeriods = ['日', '周', '月', 'N', '多', '季', '年'];
const statusItems: [string, number, string, boolean, string?][] = [
  ['上证',55,'#333',true],['3133.25',101,'#ff1010',false],['13.37',75,'#ff1010',false],['0.43%',86,'#ff1010',false],['3347',96,'#222',false,'亿'],
  ['沪深',53,'#333',true],['3791.49',102,'#ff1010',false],['26.22',74,'#ff1010',false],['0.70%',86,'#ff1010',false],['1722',96,'#222',false,'亿'],
  ['创业',54,'#333',true],['2100.26',102,'#109010',false],['-2.32',74,'#109010',false],['-0.11%',88,'#109010',false],['1872',96,'#222',false,'亿'],
];

export default function App() {
  return (
    <Page>
      <Global />
      <TopBar>
        <Brand><LogoMark />通达信金融终端</Brand>
        <Nav>
          {['行情','市场','资讯','数据','专题','发现','交易','行业','热点','L1L2'].map((t, i) => (
            <NavTab key={t} $active={i === 0}>{t}</NavTab>
          ))}
        </Nav>
        <Notice $ml={253}>交易未登录</Notice>
        <Notice $ml={24}>中原内配</Notice>
        <RightTools>
          {['功能','版面','公式','选项','帮助'].map(t => <MenuItem key={t}>{t}</MenuItem>)}
          <Clock><span>07:40:33</span><span>周一</span></Clock>
          <WinControls>
            <WinButton><ChevronLeft size={24} strokeWidth={3} /></WinButton>
            <WinButton><Minus size={16} strokeWidth={4} /></WinButton>
            <WinButton><RestoreIcon /></WinButton>
            <WinButton><X size={22} strokeWidth={3} /></WinButton>
          </WinControls>
        </RightTools>
      </TopBar>

      <Main>
        <LeftColumn>
          <Toolbar>
            <ToolIcon><PaneIcon /></ToolIcon>
            {tools.map(([t, w, on]) => <ToolBtn key={t} $w={w} $on={on}>{t}</ToolBtn>)}
            <ToolBtn $w={62}>更多<ChevronRight size={16} /></ToolBtn>
            <ToolRight>
              {toolRight.map(([t, w]) => <ToolCell key={t} $w={w}>{t}</ToolCell>)}
            </ToolRight>
          </Toolbar>

          <ChartPanel $h={698}>
            <PriceChart />
            <Legend>
              <LegendItem>中原内配(日线)</LegendItem>
              <Disc $ml={9}><ChevronDown size={13} strokeWidth={3} /></Disc>
              <LegendItem $ml={6}>青龙主图</LegendItem>
              <LegendItem $ml={7} $c="#4c4c4c">青龙: 7.59</LegendItem>
              <LegendItem $ml={16} $c="#f000f0" $fs={17.5}>MA5: 7.23</LegendItem>
              <LegendItem $ml={7} $c="#00f000" $fs={17.5}>MA10: 7.20</LegendItem>
              <LegendItem $ml={7} $c="#c0c0c0" $fs={17.5}>MA20: 7.18</LegendItem>
            </Legend>
            <ChartTools>
              <svg width="16" height="16" viewBox="0 0 16 16"><path d="M8 1l6 7-6 7-6-7z" fill="none" stroke="#888" /></svg>
              <PaneIcon size={17} />
            </ChartTools>
          </ChartPanel>

          <ChartPanel $h={519}>
            <VolumeChart />
            <VolLegend>
              <Disc><ChevronDown size={13} strokeWidth={3} /></Disc>
              <LegendItem $ml={5}>VOLUME: 113638.00</LegendItem>
              <LegendItem $ml={9}>MA5: 148785.59</LegendItem>
              <LegendItem $ml={7} $c="#e8e800">MA10: 181487.50</LegendItem>
            </VolLegend>
          </ChartPanel>

          <DateAxis />

          <TabRow $h={25} $top>
            {tabs1.map(([t, w, c]) => <TabCell key={t} $w={w} $c={c}>{t}</TabCell>)}
            <TabGap $w={709} />
            <TabCell $w={46}>港板</TabCell>
            <TabCell $w={37}>十</TabCell>
          </TabRow>
          <TabRow $h={27}>
            {tabs2.map(([t, w, c]) => <TabCell key={t} $w={w} $c={c}>{t}</TabCell>)}
          </TabRow>
        </LeftColumn>

        <Panel>
          <Block $h={40}>
            <Title><Code>002448</Code><StockName>中原内配</StockName></Title>
          </Block>
          <Block $h={31} $pt={1}>
            <Row4><Lab>委比</Lab><Val $c={G}>-26.17%</Val><Lab2>委差</Lab2><Val $c={G}>-1708</Val></Row4>
          </Block>
          <Block $h={145} $pt={1.5}>
            {sell.map(([l, p, q]) => <Row3 key={l}><Lab>{l}</Lab><Val $c={R}>{p}</Val><Val $c={Y}>{q}</Val></Row3>)}
          </Block>
          <Block $h={146} $pt={2}>
            {buy.map(([l, p, q, c]) => <Row3 key={l}><Lab>{l}</Lab><Val $c={c}>{p}</Val><Val $c={Y}>{q}</Val></Row3>)}
          </Block>
          <Block $h={145} $pt={3}>
            {stats.map(([a, b, c, d, e, f]) => (
              <Row4 key={a}><Lab>{a}</Lab><Val $c={c}>{b}</Val><Lab2>{d}</Lab2><Val $c={f}>{e}</Val></Row4>
            ))}
          </Block>
          <Block $h={92} $pt={3}>
            <Row4><Lab>换手</Lab><Val>2.39%</Val><Lab2>股本</Lab2><Val>5.88<Unit>亿</Unit></Val></Row4>
            <Row4><Lab>净资</Lab><Val>5.50</Val><Lab2>流通</Lab2><Val>4.75<Unit>亿</Unit></Val></Row4>
            <Row4><Lab>收益㈡</Lab><Val>0.310</Val><LabPe>PE(动)</LabPe><Val>11.5</Val></Row4>
          </Block>
          <Block $h={120} $pt={3}>
            {flows.map(([l, c, w, v, pct]) => (
              <RowFlow key={l}>
                <Lab>{l}</Lab>
                <FlowBar $c={c} style={{ width: w }} />
                <Val $c={c}>{v}<Unit>万</Unit></Val>
                <Val $c={c}>{pct}</Val>
              </RowFlow>
            ))}
          </Block>
          <Ticks>
            {ticks.map(([t, p, q, f, n], i) => (
              <TickRow key={i}>
                <TickTime>{t}</TickTime>
                <TickNum $c={R}>{p}</TickNum>
                <TickNum $c={q === '1659' ? '#d820d8' : Y}>{q}</TickNum>
                <TickFlag $c={f === 'S' ? G : R}>{f}</TickFlag>
                <TickNum $c="#a8a8a8">{n}</TickNum>
              </TickRow>
            ))}
          </Ticks>
        </Panel>

        <Rail>
          {railIcons.map((ic, i) => (
            ic === 'd' ? <RailDivider key={i} $h={11} /> : <RailRow key={i}>{ic}</RailRow>
          ))}
          {railNums.map(t => <RailRow key={t}><RailLabel>{t}</RailLabel></RailRow>)}
          <RailDivider $h={1} />
          {railPeriods.map((t, i) => <RailRow key={t}><RailLabel $on={i === 0}>{t}</RailLabel></RailRow>)}
        </Rail>
      </Main>

      <Status>
        <StatusIcon />
        {statusItems.map(([t, w, c, big, unit]) => (
          <StatusItem key={t} $w={w} $c={c} $big={big}>{t}{unit && <YiUnit>{unit}</YiUnit>}</StatusItem>
        ))}
        <Meter>
          <MeterRow>
            {['#e4e4e4','#e4e4e4','#ff1010','#109010','#e4e4e4','#e4e4e4'].map((c, i) => <MeterCell key={i} $c={c} $w={14} $h={10} />)}
          </MeterRow>
          <MeterRow>
            {['#109010','#109010','#109010','#109010','#109010','#109010','#109010','#ff1010','#ff1010'].map((c, i) => <MeterCell key={i} $c={c} $w={9} $h={8} />)}
          </MeterRow>
        </Meter>
      </Status>

      <Watermark>
        <WmTitle>公式指标网</WmTitle>
        <CoinLogo />
        <WmUrl>www.9m8.cn</WmUrl>
      </Watermark>
    </Page>
  );
}
